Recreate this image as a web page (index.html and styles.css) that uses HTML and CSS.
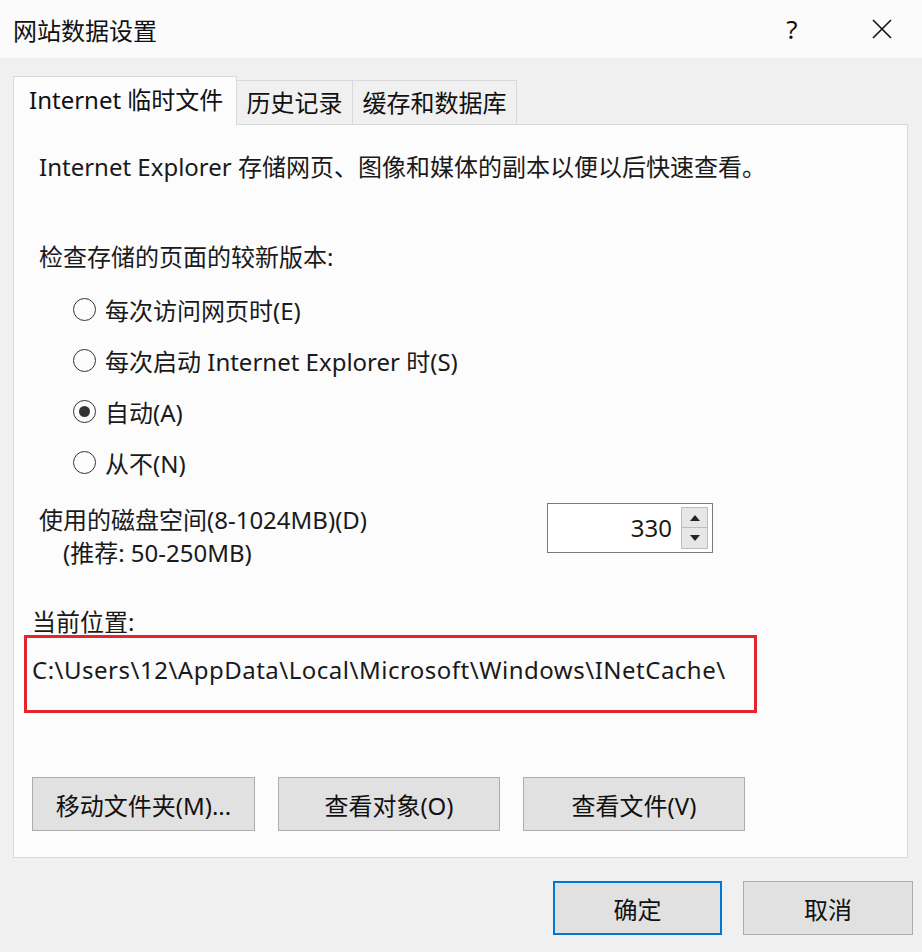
FILE: index.html
```html
<!DOCTYPE html>
<html lang="zh-CN">
<head>
<meta charset="utf-8">
<title>网站数据设置</title>
<link rel="stylesheet" href="styles.css">
</head>
<body>
<div class="window">
  <div class="titlebar">
    <span class="title">网站数据设置</span>
    <div class="title-actions">
      <span class="help">?</span>
      <svg class="close" width="20" height="20" viewBox="0 0 20 20"><path d="M1 1 L19 19 M19 1 L1 19" stroke="#111" stroke-width="1.6" fill="none"/></svg>
    </div>
  </div>
  <div class="content">
    <div class="tabs">
      <div class="tab active">Internet 临时文件</div>
      <div class="tab t2">历史记录</div>
      <div class="tab t3">缓存和数据库</div>
    </div>
    <div class="panel">
      <p class="desc">Internet Explorer 存储网页、图像和媒体的副本以便以后快速查看。</p>
      <p class="heading">检查存储的页面的较新版本:</p>
      <ul class="radios">
        <li><span class="radio"></span>每次访问网页时(E)</li>
        <li><span class="radio"></span>每次启动 Internet Explorer 时(S)</li>
        <li><span class="radio checked"></span>自动(A)</li>
        <li><span class="radio"></span>从不(N)</li>
      </ul>
      <div class="disk">
        <div class="disk-text">
          <div>使用的磁盘空间(8-1024MB)(D)</div>
          <div class="rec">(推荐: 50-250MB)</div>
        </div>
        <div class="spin">
          <span class="val">330</span>
          <div class="spin-btns">
            <span class="sbtn up"><svg width="10" height="6" viewBox="0 0 10 6"><path d="M0 6 L5 0 L10 6 Z" fill="#222"/></svg></span>
            <span class="sbtn down"><svg width="10" height="6" viewBox="0 0 10 6"><path d="M0 0 L5 6 L10 0 Z" fill="#222"/></svg></span>
          </div>
        </div>
      </div>
      <p class="loc-label">当前位置:</p>
      <div class="loc">C:\Users\12\AppData\Local\Microsoft\Windows\INetCache\</div>
      <div class="actions">
        <button class="btn w1">移动文件夹(M)...</button>
        <button class="btn w2">查看对象(O)</button>
        <button class="btn w2">查看文件(V)</button>
      </div>
    </div>
    <div class="footer">
      <button class="btn ok">确定</button>
      <button class="btn cancel">取消</button>
    </div>
  </div>
</div>
</body>
</html>
```

FILE: styles.css
```css
* { box-sizing: border-box; }
html, body { margin: 0; padding: 0; }
body {
  background: #f0f0f0;
  font-family: "Noto Sans", "Noto Sans CJK SC", sans-serif;
  color: #1a1a1a;
  font-size: 24px;
}
.window { width: 922px; height: 952px; overflow: hidden; }

.titlebar {
  height: 58px;
  background: #fbfbfb;
  display: flex;
  align-items: center;
  padding-left: 13px;
}
.title {
  flex: 1;
  font-family: "Noto Sans CJK SC", sans-serif;
  font-size: 24px;
  line-height: 1;
  color: #111;
  margin-top: 2px;
}
.title-actions { display: flex; align-items: center; margin-right: 30px; }
.help {
  width: 30px;
  text-align: center;
  font-size: 26px;
  line-height: 1;
  color: #111;
  margin-right: 65px;
}
.close { display: block; }

.content { padding: 0 14px 0 13px; }

.tabs {
  display: flex;
  align-items: flex-start;
  margin-top: 18px;
  height: 48px;
}
.tab {
  font-size: 24px;
  color: #111;
  white-space: nowrap;
}
.tab.active {
  position: relative;
  z-index: 1;
  width: 224px;
  height: 49px;
  background: #fcfcfd;
  border: 1px solid #d9d9d9;
  border-bottom: none;
  padding: 6px 0 0 15px;
  line-height: 34px;
}
.tab.t2, .tab.t3 {
  margin-top: 4px;
  height: 44px;
  background: #f0f0f0;
  border: 1px solid #d9d9d9;
  border-bottom: none;
  display: flex;
  align-items: center;
  justify-content: center;
  line-height: 1;
}
.tab.t2 { width: 116px; border-left: none; }
.tab.t3 { width: 164px; border-left: none; }

.panel {
  height: 734px;
  background: #fcfcfd;
  border: 1px solid #d9d9d9;
  padding-left: 18px;
}
.panel p { margin: 0; }
.desc { margin: 25px 0 0 7px !important; line-height: 34px; }
.heading { margin: 56px 0 0 7px !important; line-height: 34px; }

.radios { list-style: none; margin: 10px 0 0 41px; padding: 0; }
.radios li { height: 51px; display: flex; align-items: center; }
.radio {
  width: 23px;
  height: 23px;
  border: 1.5px solid #333;
  border-radius: 50%;
  margin-right: 9px;
  display: flex;
  align-items: center;
  justify-content: center;
  flex-shrink: 0;
}
.radio.checked::after {
  content: "";
  width: 11px;
  height: 11px;
  border-radius: 50%;
  background: #333;
}

.disk { display: flex; align-items: flex-start; margin-top: 15px; }
.disk-text { width: 508px; margin-left: 7px; line-height: 33px; }
.rec { padding-left: 24px; }
.spin {
  width: 166px;
  height: 50px;
  border: 1px solid #7a7a7a;
  background: #fff;
  display: flex;
  padding: 3px 4px 3px 0;
}
.val { flex: 1; text-align: right; padding-right: 9px; line-height: 42px; }
.spin-btns { width: 27px; display: flex; flex-direction: column; }
.sbtn {
  height: 21px;
  background: #e6e6e6;
  border: 1px solid #bdbdbd;
  display: flex;
  align-items: center;
  justify-content: center;
}
.sbtn.down { border-top: none; }
.sbtn svg { display: block; }

.loc-label { margin-top: 36px !important; line-height: 34px; }
.loc {
  margin: -4px 0 0 -8px;
  width: 733px;
  height: 78px;
  border: 3px solid #e3262c;
  padding: 15px 0 0 5px;
  line-height: 34px;
  letter-spacing: 0.5px;
  white-space: nowrap;
}

.actions { display: flex; gap: 23px; margin-top: 64px; }
.btn {
  height: 54px;
  background: #e1e1e1;
  border: 1px solid #adadad;
  font-family: "Noto Sans", "Noto Sans CJK SC", sans-serif;
  font-size: 24px;
  color: #111;
  padding: 0;
  white-space: nowrap;
}
.w1 { width: 223px; }
.w2 { width: 222px; }

.footer {
  display: flex;
  justify-content: flex-end;
  gap: 21px;
  margin: 23px -5px 0 0;
}
.ok { width: 169px; border: 2px solid #0078d7; }
.cancel { width: 170px; }
```
